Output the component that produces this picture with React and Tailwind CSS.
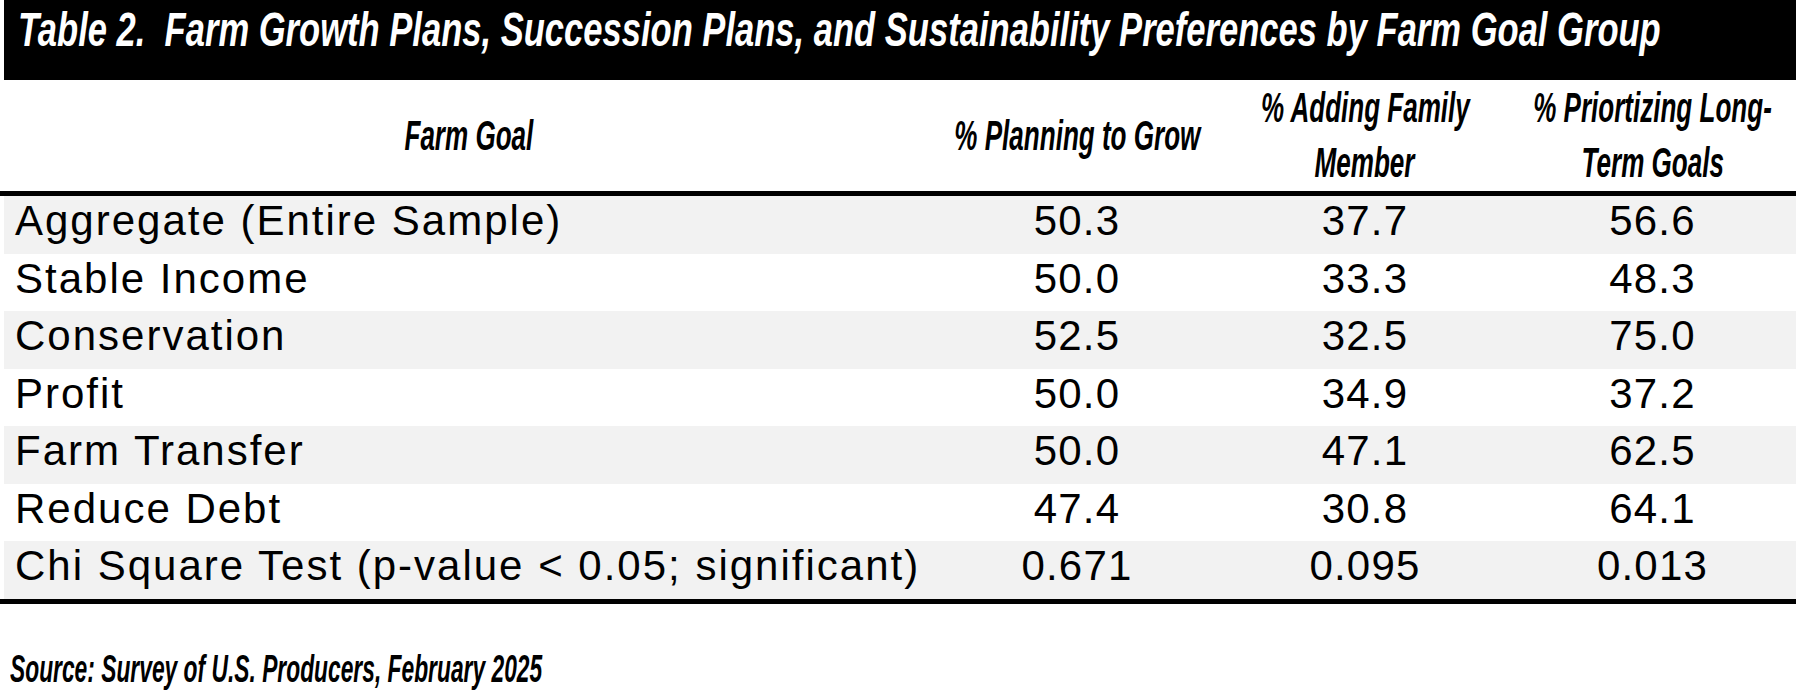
import React from "react";

const rows = [
  { goal: "Aggregate (Entire Sample)", grow: "50.3", family: "37.7", longTerm: "56.6" },
  { goal: "Stable Income", grow: "50.0", family: "33.3", longTerm: "48.3" },
  { goal: "Conservation", grow: "52.5", family: "32.5", longTerm: "75.0" },
  { goal: "Profit", grow: "50.0", family: "34.9", longTerm: "37.2" },
  { goal: "Farm Transfer", grow: "50.0", family: "47.1", longTerm: "62.5" },
  { goal: "Reduce Debt", grow: "47.4", family: "30.8", longTerm: "64.1" },
  { goal: "Chi Square Test (p-value < 0.05; significant)", grow: "0.671", family: "0.095", longTerm: "0.013" },
];

const cols = "grid grid-cols-[929px_288px_288px_minmax(0,1fr)]";

// condensed italic look: bold italic squeezed horizontally
const HeadLine = ({ children }) => (
  <span className="inline-block shrink-0 whitespace-nowrap scale-x-[0.62] leading-[55px]">{children}</span>
);

const HeadCell = ({ lines }) => (
  <div className="min-w-0 flex flex-col items-center justify-center overflow-visible">
    {lines.map((l) => (
      <HeadLine key={l}>{l}</HeadLine>
    ))}
  </div>
);

export default function App() {
  return (
    <div className="w-[1796px] min-h-[700px] bg-white text-black font-['Liberation_Sans',Arial,sans-serif]">
      {/* Title bar */}
      <div className="ml-[4px] h-[80px] bg-black pl-[14px] pt-[6px] overflow-hidden">
        <span className="inline-block whitespace-pre origin-left scale-x-[0.72] text-[48px] leading-[48px] font-bold italic text-white">
          {"Table 2.  Farm Growth Plans, Succession Plans, and Sustainability Preferences by Farm Goal Group"}
        </span>
      </div>

      {/* Column headers */}
      <div className={`${cols} ml-[4px] h-[111px] pb-[3px] text-[42px] font-bold italic`}>
        <HeadCell lines={["Farm Goal"]} />
        <HeadCell lines={["% Planning to Grow"]} />
        <HeadCell lines={["% Adding Family", "Member"]} />
        <HeadCell lines={["% Priortizing Long-", "Term Goals"]} />
      </div>

      <div className="h-[5px] bg-black" />

      {/* Body */}
      <div className="text-[42px]">
        {rows.map((r, i) => (
          <div
            key={r.goal}
            className={`${cols} ml-[4px] h-[57.5px] items-center pb-[8px] ${i % 2 === 0 ? "bg-[#f2f2f2]" : "bg-white"}`}
          >
            <div className="pl-[11px] whitespace-nowrap leading-[50px] tracking-[2px]">{r.goal}</div>
            <div className="text-center leading-[50px] tracking-[1.2px]">{r.grow}</div>
            <div className="text-center leading-[50px] tracking-[1.2px]">{r.family}</div>
            <div className="text-center leading-[50px] tracking-[1.2px]">{r.longTerm}</div>
          </div>
        ))}
      </div>

      <div className="h-[5px] bg-black" />

      {/* Source */}
      <div className="mt-[46px] pl-[10px]">
        <span className="inline-block whitespace-nowrap origin-left scale-x-[0.6] text-[38px] leading-[38px] font-bold italic">
          Source: Survey of U.S. Producers, February 2025
        </span>
      </div>
    </div>
  );
}
